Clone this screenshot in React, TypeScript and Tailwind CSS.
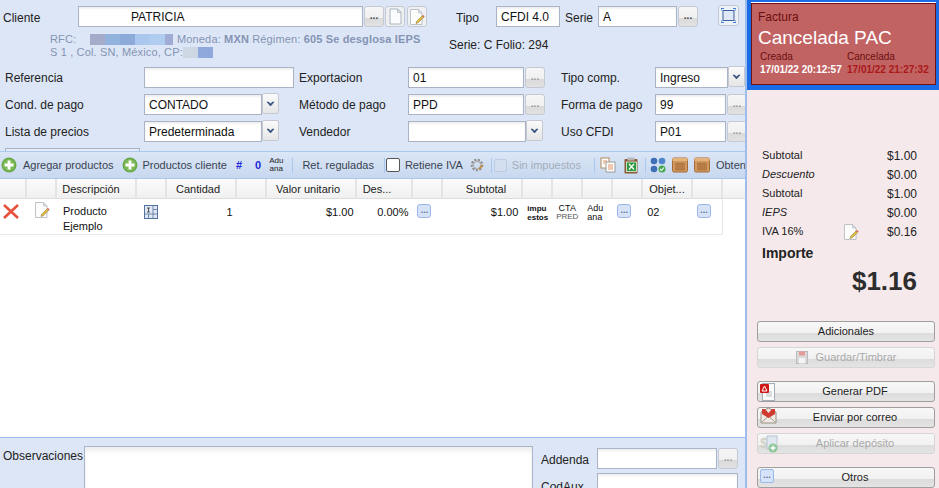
const Input = ({ value, className = '' }: { value?: string; className?: string }) => (
  <div className={`h-[21px] shrink-0 border border-[#aab4c6] bg-white px-[4px] text-[12px] leading-[21px] text-[#111] shadow-[inset_0_2px_2px_#f0f0f0] ${className}`}>
    {value}
  </div>
);

const DotsBtn = ({ className = '', faded = false }: { className?: string; faded?: boolean }) => (
  <div className={`flex h-[21px] w-[20px] shrink-0 items-center justify-center rounded-[3px] border border-[#c4c9d2] bg-[linear-gradient(#f6f6f6_0%,#f0f0f0_58%,#dadada_60%,#e2e2e2_100%)] text-[10px] font-bold leading-none ${faded ? 'text-[#9a9a9a]' : 'text-[#444]'} ${className}`}>
    <span className="-mt-[1px]">...</span>
  </div>
);

const DropBtn = ({ className = '' }: { className?: string }) => (
  <div className={`flex h-[21px] w-[17px] shrink-0 items-center justify-center rounded-[2px] border border-[#c4c9d2] bg-[linear-gradient(#fafafa,#e6e6e6)] ${className}`}>
    <svg width="9" height="6" viewBox="0 0 9 6"><path d="M1 1 L4.5 5 L8 1 L6.5 1 L4.5 3 L2.5 1 Z" fill="#2f4a7a" stroke="#2f4a7a" strokeWidth="0.6" /></svg>
  </div>
);

const DocEdit = ({ size = 16 }: { size?: number }) => (
  <svg width={size} height={size} viewBox="0 0 16 16" className="shrink-0">
    <path d="M1.5 0.5 H9.5 L13 4 V15.5 H1.5 Z" fill="#fcfcfa" stroke="#aeb5bd" strokeWidth="0.8" />
    <path d="M9.5 0.5 V4 H13 Z" fill="#dfe4ea" stroke="#aeb5bd" strokeWidth="0.6" />
    <path d="M7 14.5 L7.6 12.3 L13.2 6.8 L14.8 8.3 L9.2 13.8 Z" fill="#e5bd45" stroke="#7f7030" strokeWidth="0.5" />
    <path d="M13.2 6.8 L14.8 8.3 L15.6 7.4 L14 5.9 Z" fill="#d9534f" />
  </svg>
);

const BlankDoc = () => (
  <svg width="15" height="17" viewBox="0 0 15 17">
    <path d="M2 1 H9.5 L13 4.5 V16 H2 Z" fill="#fbfcfd" stroke="#9aa3ad" strokeWidth="0.8" />
    <path d="M9.5 1 V4.5 H13 Z" fill="#dde3ea" stroke="#9aa3ad" strokeWidth="0.6" />
  </svg>
);

const PlusIcon = () => (
  <svg width="16" height="16" viewBox="0 0 16 16" className="shrink-0">
    <circle cx="8" cy="8" r="7.5" fill="#6aa84a" />
    <circle cx="8" cy="8" r="6" fill="#7dbb57" />
    <path d="M6.6 3.5 H9.4 V6.6 H12.5 V9.4 H9.4 V12.5 H6.6 V9.4 H3.5 V6.6 H6.6 Z" fill="#fff" />
  </svg>
);

const Crate = () => (
  <svg width="16" height="16" viewBox="0 0 16 16" className="shrink-0">
    <rect x="0.5" y="1" width="15" height="14" rx="1.5" fill="#d39a60" stroke="#a56b38" />
    <rect x="0.5" y="1" width="15" height="3" fill="#e3b27e" />
    <path d="M3.5 6 H12.5 V13 H3.5 Z" fill="#c98d52" stroke="#a56b38" strokeWidth="0.6" />
    <path d="M5.2 6 V13 M7 6 V13 M9 6 V13 M10.8 6 V13" stroke="#99642f" strokeWidth="0.7" />
  </svg>
);

const Sep = ({ className = '' }: { className?: string }) => <div className={`h-[15px] w-px shrink-0 bg-[#a9c8ee] ${className}`} />;

const Dots = () => (
  <div className="flex h-[14px] w-[14px] items-center justify-center rounded-[3px] border border-[#9db8e6] bg-[#d5e2f7] text-[9px] font-bold leading-none text-[#5f7396]">
    <span className="-mt-[2px]">...</span>
  </div>
);

const columns = [27, 30, 80, 30, 70, 30, 90, 56, 30, 80, 30, 30, 30, 30, 50, 30];
const headers: Record<number, { text: string; cls: string }> = {
  2: { text: 'Descripción', cls: 'pr-[10px]' },
  4: { text: 'Cantidad', cls: 'pr-[6px]' },
  6: { text: 'Valor unitario', cls: 'pr-[6px]' },
  7: { text: 'Des...', cls: 'pr-[14px]' },
  9: { text: 'Subtotal', cls: 'pl-[8px]' },
  14: { text: 'Objet...', cls: '' },
};

const Blur = ({ w, c }: { w: number; c: string }) => <span className="inline-block h-[11px]" style={{ width: w, background: c }} />;

const summary = [
  { label: 'Subtotal', value: '$1.00' },
  { label: 'Descuento', value: '$0.00', italic: true },
  { label: 'Subtotal', value: '$1.00' },
  { label: 'IEPS', value: '$0.00', italic: true },
];

const SideBtn = ({ label, icon, disabled, center, className = '' }: { label: string; icon?: React.ReactNode; disabled?: boolean; center?: boolean; className?: string }) => (
  <div className={`relative flex h-[21px] w-[178px] items-center justify-center rounded-[3px] border bg-[linear-gradient(#f7f7f7_0%,#f1f1f1_58%,#dcdcdc_60%,#e4e4e4_100%)] text-[11px] ${disabled ? 'border-[#d6d6d6] text-[#aaa]' : 'border-[#9f9f9f] text-[#222]'} ${className}`}>
    {center ? (
      <span className="flex items-center gap-[8px]">{icon}{label}</span>
    ) : (
      <>
        <span className="absolute left-[2px] top-[1px]">{icon}</span>
        <span className="pl-[18px]">{label}</span>
      </>
    )}
  </div>
);

export default function App() {
  return (
    <div className="flex h-[488px] w-[939px] overflow-hidden bg-white font-['Liberation_Sans',Arial,sans-serif] text-[12px] text-[#222]">
      {/* main column */}
      <div className="flex w-[747px] shrink-0 flex-col border-r-2 border-[#9dbdec]">
        <div className="h-[151px] shrink-0 overflow-hidden bg-[#dde6f6] pl-[3px]">
          {/* cliente row */}
          <div className="mt-[6px] flex items-start">
            <span className="mt-[3px] w-[75px] shrink-0">Cliente</span>
            <Input value="PATRICIA" className="w-[285px] pl-[52px]" />
            <DotsBtn className="ml-px" />
            <div className="ml-px flex h-[21px] w-[20px] shrink-0 items-center justify-center rounded-[3px] border border-[#c4c9d2] bg-[#eef0f3]"><BlankDoc /></div>
            <div className="ml-[2px] flex h-[21px] w-[20px] shrink-0 items-center justify-center rounded-[3px] border border-[#c4c9d2] bg-[#eef0f3]"><DocEdit /></div>
            <span className="ml-[29px] mt-[3px] w-[40px] shrink-0">Tipo</span>
            <Input value="CFDI 4.0" className="w-[64px]" />
            <span className="ml-[5px] mt-[3px] w-[33px] shrink-0">Serie</span>
            <Input value="A" className="w-[79px]" />
            <DotsBtn className="ml-px" />
            <div className="-mt-px ml-[20px] flex h-[21px] w-[21px] shrink-0 items-center justify-center rounded-[3px] border border-[#c4c9d2] bg-[#edf1f8]">
              <svg width="15" height="15" viewBox="0 0 15 15"><rect x="2" y="2.5" width="11" height="10" fill="#dfe8f7" stroke="#3d5f9e" /><path d="M0 3 V0.5 H3 M12 0.5 H15 V3 M0 12 V14.5 H3 M12 14.5 H15 V12" fill="none" stroke="#3f7fd6" /></svg>
            </div>
          </div>

          {/* client info */}
          <div className="flex">
            <div className="ml-[47px] mt-[6px] w-[399px] shrink-0 text-[11px] leading-[13px] tracking-[0.15px] text-[#8494b4]">
              <div className="flex items-center whitespace-nowrap">
                <span className="w-[40px]">RFC:</span>
                <Blur w={15} c="#a6abc9" /><Blur w={15} c="#93b3df" /><Blur w={15} c="#8cabd8" /><Blur w={15} c="#aac8ee" /><Blur w={15} c="#b0cdf0" /><Blur w={8} c="#a0acd4" />
                <span className="ml-[4px]">Moneda: <b>MXN</b> Régimen: <b>605 Se desglosa IEPS</b></span>
              </div>
              <div className="flex items-center whitespace-nowrap">
                <span>S 1 , Col. SN, México, CP:</span>
                <Blur w={15} c="#ccd7e3" /><Blur w={15} c="#8fa9dc" />
              </div>
            </div>
            <span className="mt-[9px] whitespace-nowrap">Serie: C Folio: 294</span>
          </div>

          {/* referencia row */}
          <div className="mt-[8px] flex items-center pl-[2px]">
            <span className="w-[139px] shrink-0">Referencia</span>
            <Input className="w-[150px]" />
            <span className="ml-[5px] w-[109px] shrink-0">Exportacion</span>
            <Input value="01" className="w-[116px]" />
            <DotsBtn className="ml-px" faded />
            <span className="ml-[16px] w-[94px] shrink-0">Tipo comp.</span>
            <Input value="Ingreso" className="w-[73px]" />
            <DropBtn className="-mt-[2px]" />
          </div>

          {/* condiciones row */}
          <div className="mt-[6px] flex items-center pl-[2px]">
            <span className="w-[139px] shrink-0">Cond. de pago</span>
            <Input value="CONTADO" className="w-[118px]" />
            <DropBtn className="-mt-[2px]" />
            <span className="ml-[20px] w-[109px] shrink-0">Método de pago</span>
            <Input value="PPD" className="w-[116px]" />
            <DotsBtn className="ml-px" faded />
            <span className="ml-[16px] w-[94px] shrink-0">Forma de pago</span>
            <Input value="99" className="w-[71px]" />
            <DotsBtn className="ml-px w-[19px]" faded />
          </div>

          {/* lista row */}
          <div className="mt-[6px] flex items-center pl-[2px]">
            <span className="w-[139px] shrink-0">Lista de precios</span>
            <Input value="Predeterminada" className="w-[118px]" />
            <DropBtn className="-mt-[2px]" />
            <span className="ml-[20px] w-[109px] shrink-0">Vendedor</span>
            <Input className="w-[118px]" />
            <DropBtn className="-mt-[2px]" />
            <span className="ml-[18px] w-[94px] shrink-0">Uso CFDI</span>
            <Input value="P01" className="w-[71px]" />
            <DotsBtn className="ml-px w-[19px]" faded />
          </div>

          <div className="ml-[2px] mt-[6px] h-[6px] w-[135px] border border-[#aab4c6] bg-[#e6ebf5]" />
        </div>

        {/* toolbar */}
        <div className="flex h-[28px] shrink-0 items-center overflow-hidden whitespace-nowrap border-y border-[#a9c8ee] bg-[linear-gradient(#dbe6f6,#c8d8ef)] pl-px text-[11px] text-[#3a4350]">
          <PlusIcon />
          <span className="ml-[6px]">Agregar productos</span>
          <div className="ml-[8px] shrink-0"><PlusIcon /></div>
          <span className="ml-[5px]">Productos cliente</span>
          <b className="ml-[9px] text-[#1c28d8]">#</b>
          <b className="ml-[13px] text-[#1c28d8]">0</b>
          <span className="ml-[8px] text-center text-[8px] leading-[8px] text-[#222]">Adu<br />ana</span>
          <Sep className="ml-[9px]" />
          <span className="ml-[9px]">Ret. reguladas</span>
          <Sep className="ml-[10px]" />
          <div className="ml-px h-[14px] w-[14px] shrink-0 rounded-[2px] border border-[#555] bg-white" />
          <span className="ml-[5px]">Retiene IVA</span>
          <svg className="ml-[6px] shrink-0" width="16" height="16" viewBox="0 0 16 16"><circle cx="8" cy="8" r="5" fill="none" stroke="#8e8e8e" strokeWidth="2.6" strokeDasharray="2 1.4" /><circle cx="8" cy="8" r="3.6" fill="none" stroke="#b0b0b0" strokeWidth="1.2" /><path d="M10 12 L14 8" stroke="#c98a2c" strokeWidth="1.4" /></svg>
          <Sep className="ml-[6px]" />
          <div className="ml-[2px] h-[13px] w-[13px] shrink-0 rounded-[2px] border border-[#bccbe0] bg-[#d3deef]" />
          <span className="ml-[5px] text-[#a3adba]">Sin impuestos</span>
          <Sep className="ml-[13px]" />
          <svg className="ml-[5px] shrink-0" width="16" height="16" viewBox="0 0 16 16"><rect x="1" y="1" width="8" height="10" fill="#fff" stroke="#b08a5a" /><rect x="6" y="5" width="9" height="10" fill="#fff" stroke="#9a9a9a" /><path d="M3 4 H7 M3 6 H5 M8 8 H13 M8 10 H13 M8 12 H13" stroke="#d9743a" strokeWidth="0.8" /></svg>
          <svg className="ml-[7px] shrink-0" width="16" height="17" viewBox="0 0 16 17"><rect x="1.5" y="2" width="13" height="14.5" rx="1" fill="#8a5a34" /><rect x="4.5" y="0.5" width="7" height="3" fill="#b9b9b9" /><rect x="3.5" y="5" width="10" height="9.5" fill="#2f9a3f" stroke="#eaf5ea" strokeWidth="0.8" /><path d="M6 7 L11 12.5 M11 7 L6 12.5" stroke="#fff" strokeWidth="1.2" /></svg>
          <Sep className="ml-[6px]" />
          <svg className="ml-[4px] shrink-0" width="16" height="16" viewBox="0 0 16 16"><circle cx="4" cy="4" r="3.3" fill="#3f6fb5" /><circle cx="12" cy="4" r="3.3" fill="#4f86c9" /><circle cx="4" cy="12" r="3.3" fill="#3f6fb5" /><circle cx="12" cy="12" r="3.5" fill="#43a84d" /><path d="M10 12 L11.5 13.5 L14 10.5" fill="none" stroke="#fff" strokeWidth="1.1" /></svg>
          <div className="ml-[6px] shrink-0"><Crate /></div>
          <div className="ml-[6px] shrink-0"><Crate /></div>
          <span className="ml-[6px]">Obtener</span>
        </div>

        {/* table */}
        <div className="flex min-h-0 flex-1 flex-col bg-white">
          <div className="flex h-[20px] shrink-0 border-b border-[#ddd] bg-[linear-gradient(#fbfbfb,#f0f0f0)] text-[11px] text-[#222]">
            {columns.map((w, i) => (
              <div key={i} className={`flex items-center justify-center border-r-2 border-[#e4e4e4] pt-[2px] ${headers[i]?.cls ?? ''}`} style={{ width: w }}>{headers[i]?.text}</div>
            ))}
            <div className="flex-1" />
          </div>
          <div className="flex h-[36px] w-[723px] shrink-0 border-r border-b border-[#e8e8e8] pt-[3px] text-[11px] text-[#111]">
            <div className="w-[27px] pl-[2px]">
              <svg width="18" height="18" viewBox="0 0 18 18"><path d="M2 3 L16 16 M16 3 L2 16" stroke="#e8503a" strokeWidth="2.6" /></svg>
            </div>
            <div className="w-[30px] pl-[7px]"><DocEdit /></div>
            <div className="w-[80px] pl-[6px] pt-[2px] leading-[15px]">Producto Ejemplo</div>
            <div className="w-[30px] pl-[7px] pt-[3px]">
              <svg width="14" height="14" viewBox="0 0 14 14"><rect x="0.5" y="0.5" width="13" height="13" fill="#dfe7f4" stroke="#54749f" /><path d="M0.5 9 H13.5 M9 0.5 V13.5 M4.5 9 V13.5 M9 4.5 H13.5" stroke="#54749f" strokeWidth="0.8" /><path d="M3 3 H6 M3 7 H6 M4.5 3 V7" stroke="#333" strokeWidth="0.8" /></svg>
            </div>
            <div className="w-[70px] pr-[4px] pt-[2px] text-right">1</div>
            <div className="w-[30px]" />
            <div className="w-[90px] pr-[3px] pt-[2px] text-right">$1.00</div>
            <div className="w-[56px] pr-[4px] pt-[2px] text-right">0.00%</div>
            <div className="w-[30px] pl-[5px] pt-[2px]"><Dots /></div>
            <div className="w-[80px] pr-[4px] pt-[2px] text-right">$1.00</div>
            <div className="w-[30px] pl-[5px] pt-[2px] text-[8px] font-bold leading-[9px]">impu<br />estos</div>
            <div className="w-[30px] pl-[5px] pt-[2px] text-center text-[9px] leading-[8px]"><div className="-ml-[5px]">CTA<br /><span className="text-[8px] text-[#555]">PRED</span></div></div>
            <div className="w-[30px] pl-[5px] pt-[2px] text-[9px] leading-[9px]">Adu<br />ana</div>
            <div className="w-[30px] pl-[5px] pt-[2px]"><Dots /></div>
            <div className="w-[50px] pl-[5px] pt-[2px]">02</div>
            <div className="w-[30px] pl-[5px] pt-[2px]"><Dots /></div>
          </div>
        </div>

        {/* bottom */}
        <div className="flex h-[51px] shrink-0 overflow-hidden border-t border-[#9dbdec] bg-[#dde6f6]">
          <span className="ml-[3px] mt-[9px] w-[81px] shrink-0">Observaciones</span>
          <div className="mt-[8px] h-[60px] w-[449px] shrink-0 border border-[#aab4c6] bg-white shadow-[inset_0_4px_4px_#eee]" />
          <div className="ml-[8px] mt-[10px] w-[200px]">
            <div className="flex items-center">
              <span className="w-[56px] pt-[2px]">Addenda</span>
              <Input className="w-[120px]" />
              <DotsBtn className="ml-px" faded />
            </div>
            <div className="mt-[4px] flex">
              <span className="mt-[5px] w-[56px]">CodAux</span>
              <Input className="w-[141px]" />
            </div>
          </div>
        </div>
      </div>

      {/* side panel */}
      <div className="flex min-w-0 flex-1 flex-col bg-[#f5e9eb]">
        <div className="h-[90px] shrink-0 border-b-[5px] border-l-[4px] border-r-[3px] border-t-[2px] border-[#1a6be6] bg-white pt-px">
          <div className="h-full border border-[#6e1212] bg-[#c26363] pl-[6px] pt-[7px]">
            <div className="text-[12px] leading-[13px] text-[#6a0f0f]">Factura</div>
            <div className="mt-px whitespace-nowrap text-[19px] leading-[25px] text-white">Cancelada PAC</div>
            <div className="mt-px flex text-[10px] leading-[12px]">
              <div className="ml-[2px] w-[87px] whitespace-nowrap">
                <div className="text-[#6a0f0f]">Creada</div>
                <div className="mt-px font-bold text-white">17/01/22 20:12:57</div>
              </div>
              <div className="whitespace-nowrap">
                <div className="text-[#6a0f0f]">Cancelada</div>
                <div className="mt-px font-bold text-[#a81818]">17/01/22 21:27:32</div>
              </div>
            </div>
          </div>
        </div>

        <div className="mt-[56px] pl-[15px] pr-[22px] text-[11px] text-[#222]">
          {summary.map((s, i) => (
            <div key={i} className="flex h-[19px] items-center justify-between">
              <span className={s.italic ? 'italic' : ''}>{s.label}</span>
              <span className="text-[12px]">{s.value}</span>
            </div>
          ))}
          <div className="flex h-[19px] items-center">
            <span className="w-[81px]">IVA 16%</span>
            <DocEdit />
            <span className="ml-auto text-[12px]">$0.16</span>
          </div>
          <div className="mt-[4px] text-[14px] font-bold leading-[16px]">Importe</div>
          <div className="mt-[5px] text-right text-[26px] font-bold leading-[30px] text-[#2d2d2d]">$1.16</div>
        </div>

        <div className="ml-[10px] mt-[25px] flex flex-col">
          <SideBtn label="Adicionales" className="!justify-center" center />
          <SideBtn
            label="Guardar/Timbrar"
            disabled
            center
            className="mt-[5px]"
            icon={<svg width="12" height="13" viewBox="0 0 12 13"><rect x="0.5" y="0.5" width="11" height="12" fill="#d9d9d9" stroke="#bbb" /><rect x="3" y="0.5" width="6" height="4" fill="#e59a9a" /><rect x="3" y="7" width="6" height="5.5" fill="#f4f4f4" /></svg>}
          />
          <SideBtn
            label="Generar PDF"
            className="mt-[13px]"
            icon={<svg width="15" height="18" viewBox="0 0 15 18"><rect x="2.5" y="0.5" width="12" height="17" fill="#fafafa" stroke="#a4acb5" /><path d="M6 9 H12 M6 11 H12 M6 13 H12" stroke="#9aa" strokeWidth="0.7" /><rect x="0" y="1" width="9" height="9" rx="1" fill="#cf1717" /><path d="M2 8 L4.5 3 L7 8 Z" fill="none" stroke="#fff" strokeWidth="1" /></svg>}
          />
          <SideBtn
            label="Enviar por correo"
            className="mt-[5px]"
            icon={<svg width="17" height="17" viewBox="0 0 17 17" className="-mt-[2px]"><path d="M1 5 L8.5 1 L16 5 V16 H1 Z" fill="#eee9e2" stroke="#9b9086" /><path d="M1.5 15.5 L8.5 9 L15.5 15.5" fill="none" stroke="#a89d92" /><path d="M2 2 H5 L8.5 6 L12 2 H15 V7 L8.5 11 L2 7 Z" fill="#d13b2f" /></svg>}
          />
          <SideBtn
            label="Aplicar depósito"
            disabled
            className="mt-[5px]"
            icon={<svg width="18" height="18" viewBox="0 0 18 18"><text x="0" y="13" fontSize="14" fontWeight="bold" fill="#cfd3c8">$</text><rect x="7" y="1" width="10" height="13" fill="#dfe8f0" stroke="#b9c4cf" /><circle cx="13" cy="13" r="4.5" fill="#8fc79a" /><path d="M13 10.5 V15.5 M10.5 13 H15.5" stroke="#fff" strokeWidth="1.4" /></svg>}
          />
          <SideBtn
            label="Otros"
            className="mt-[13px]"
            icon={<div className="flex h-[14px] w-[14px] items-center justify-center rounded-[2px] border border-[#9db8e6] bg-[#d5e2f7] text-[9px] font-bold leading-none text-[#5f7396]"><span className="-mt-[2px]">...</span></div>}
          />
        </div>
      </div>
    </div>
  );
}
